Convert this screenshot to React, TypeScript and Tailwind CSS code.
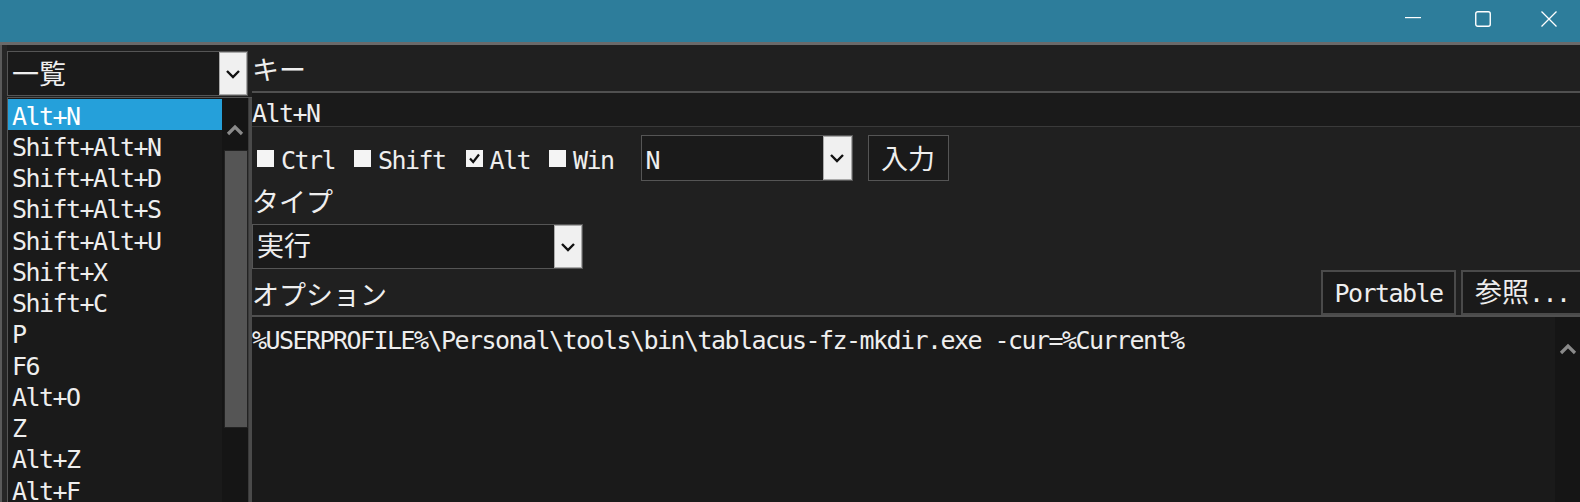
import React from "react";

const items = [
  "Alt+N",
  "Shift+Alt+N",
  "Shift+Alt+D",
  "Shift+Alt+S",
  "Shift+Alt+U",
  "Shift+X",
  "Shift+C",
  "P",
  "F6",
  "Alt+O",
  "Z",
  "Alt+Z",
  "Alt+F",
];

function DownChevron() {
  return (
    <svg width="16" height="10" viewBox="0 0 16 10">
      <path d="M2 2 L8 8 L14 2" fill="none" stroke="#111" strokeWidth="2.4" />
    </svg>
  );
}

function UpChevron() {
  return (
    <svg width="18" height="12" viewBox="0 0 18 12">
      <path d="M2 10 L9 3 L16 10" fill="none" stroke="#8a8a8a" strokeWidth="3.2" />
    </svg>
  );
}

function Check({ checked }: { checked?: boolean }) {
  return (
    <div className="w-[17px] h-[17px] bg-[#f4f4f4] flex items-center justify-center shrink-0">
      {checked && (
        <svg width="13" height="13" viewBox="0 0 13 13">
          <path d="M2 6.5 L5.2 10 L11 2.5" fill="none" stroke="#111" strokeWidth="2.2" />
        </svg>
      )}
    </div>
  );
}

const J = ({ children }: { children: React.ReactNode }) => (
  <span className="text-[27px] tracking-normal">{children}</span>
);

export default function App() {
  return (
    <div className="w-[1580px] h-[502px] overflow-hidden bg-[#202020] text-[#eeeeee] font-['DejaVu_Sans_Mono','Noto_Sans_CJK_JP',monospace] text-[25px] tracking-[-1.55px] leading-none flex flex-col">
      {/* Title bar */}
      <div className="h-[42px] bg-[#2d7d9b] flex justify-end items-start shrink-0">
        <div className="w-[70px] h-[42px] flex items-start justify-center pt-[17px]">
          <svg width="16" height="2" viewBox="0 0 16 2">
            <rect x="0" y="0" width="16" height="1.2" fill="#ffffff" />
          </svg>
        </div>
        <div className="w-[70px] h-[42px] flex items-start justify-center pt-[11px]">
          <svg width="16" height="16" viewBox="0 0 16 16">
            <rect x="0.75" y="0.75" width="14.5" height="14.5" rx="2" fill="none" stroke="#ffffff" strokeWidth="1.4" />
          </svg>
        </div>
        <div className="w-[62px] h-[42px] flex items-start justify-center pt-[11px]">
          <svg width="16" height="16" viewBox="0 0 16 16">
            <path d="M0.5 0.5 L15.5 15.5 M15.5 0.5 L0.5 15.5" stroke="#ffffff" strokeWidth="1.3" />
          </svg>
        </div>
      </div>
      <div className="h-[3px] bg-[#6a6a6a] shrink-0" />

      <div className="flex flex-1 min-h-0">
        {/* window left border */}
        <div className="w-[2px] bg-[#5a5a5a] shrink-0" />
        <div className="w-[5px] bg-[#262626] shrink-0" />

        {/* Left column */}
        <div className="w-[245px] shrink-0 flex flex-col">
          <div className="h-[6px]" />
          <div className="w-[241px] h-[45px] border border-[#555] bg-[#1a1a1a] flex shrink-0">
            <div className="flex-1 flex items-center pl-[4px] pt-[2px]">
              <J>一覧</J>
            </div>
            <div className="w-[28px] bg-[#f0f0f0] border border-[#aaa] flex items-center justify-center">
              <DownChevron />
            </div>
          </div>
          <div className="flex-1 min-h-0 mt-[1px] border-t border-l border-[#555] flex">
            <div className="w-[214px] bg-[#1a1a1a] pt-[1px] flex flex-col">
              {items.map((it, i) => (
                <div
                  key={it}
                  className={
                    "h-[31.25px] shrink-0 flex items-center pl-[4px] pt-[3px] " +
                    (i === 0 ? "bg-[#25a0da] text-white" : "")
                  }
                >
                  {it}
                </div>
              ))}
            </div>
            <div className="w-[26px] bg-[#151515] flex flex-col">
              <div className="h-[52px] flex items-center justify-center pt-[11px]">
                <UpChevron />
              </div>
              <div className="ml-[2px] w-[24px] h-[278px] bg-[#555555] border border-[#222]" />
            </div>
            <div className="w-[4px] bg-[#4a4a4a] border-l border-[#3a3a3a]" />
          </div>
        </div>

        {/* Right column */}
        <div className="flex-1 min-w-0 flex flex-col overflow-hidden">
          <div className="h-[46px] flex items-center pt-[4px] shrink-0">
            <J>キー</J>
          </div>
          <div className="h-[36px] bg-[#1a1a1a] border-t-2 border-b border-[#505050] border-b-[#3a3a3a] flex items-center pt-[8px] shrink-0">
            Alt+N
          </div>
          <div className="h-[8px] shrink-0" />
          <div className="h-[46px] flex items-center pl-[5px] shrink-0">
            <div className="flex items-center gap-[7px]">
              <Check />
              <span className="pt-[4px]">Ctrl</span>
            </div>
            <div className="flex items-center gap-[7px] ml-[19px]">
              <Check />
              <span className="pt-[4px]">Shift</span>
            </div>
            <div className="flex items-center gap-[7px] ml-[20px]">
              <Check checked />
              <span className="pt-[4px]">Alt</span>
            </div>
            <div className="flex items-center gap-[7px] ml-[19px]">
              <Check />
              <span className="pt-[4px]">Win</span>
            </div>
            <div className="ml-[27px] w-[212px] h-[46px] border border-[#555] bg-[#1a1a1a] flex">
              <div className="flex-1 flex items-center pl-[4px] pt-[4px]">N</div>
              <div className="w-[29px] bg-[#f0f0f0] border border-[#aaa] flex items-center justify-center">
                <DownChevron />
              </div>
            </div>
            <div className="ml-[15px] w-[81px] h-[46px] border border-[#555] bg-[#1a1a1a] flex items-center justify-center pt-[2px]">
              <J>入力</J>
            </div>
          </div>
          <div className="h-[43px] flex items-center shrink-0">
            <J>タイプ</J>
          </div>
          <div className="w-[331px] h-[45px] border border-[#555] bg-[#1a1a1a] flex shrink-0">
            <div className="flex-1 flex items-center pl-[4px]">
              <J>実行</J>
            </div>
            <div className="w-[28px] bg-[#f0f0f0] border border-[#aaa] flex items-center justify-center">
              <DownChevron />
            </div>
          </div>
          <div className="h-[46px] flex items-center shrink-0">
            <div className="w-[1069px] shrink-0 flex items-center pt-[6px]">
              <J>オプション</J>
            </div>
            <div className="w-[135px] h-[45px] shrink-0 border-2 border-[#4a4a4a] bg-[#1a1a1a] flex items-center justify-center pt-[2px]">
              Portable
            </div>
            <div className="ml-[5px] w-[126px] h-[45px] shrink-0 border-2 border-[#4a4a4a] bg-[#1a1a1a] flex items-center pl-[12px]">
              <J>参照</J>
              <span className="pt-[2px]">...</span>
            </div>
          </div>
          <div className="flex-1 min-h-0 bg-[#1a1a1a] border-t-2 border-[#505050] flex">
            <div className="flex-1 h-[46px] flex items-center whitespace-nowrap">
              %USERPROFILE%\Personal\tools\bin\tablacus-fz-mkdir.exe -cur=%Current%
            </div>
            <div className="w-[25px] bg-[#151515] flex flex-col items-center pt-[26px]">
              <UpChevron />
            </div>
          </div>
        </div>
      </div>
    </div>
  );
}
